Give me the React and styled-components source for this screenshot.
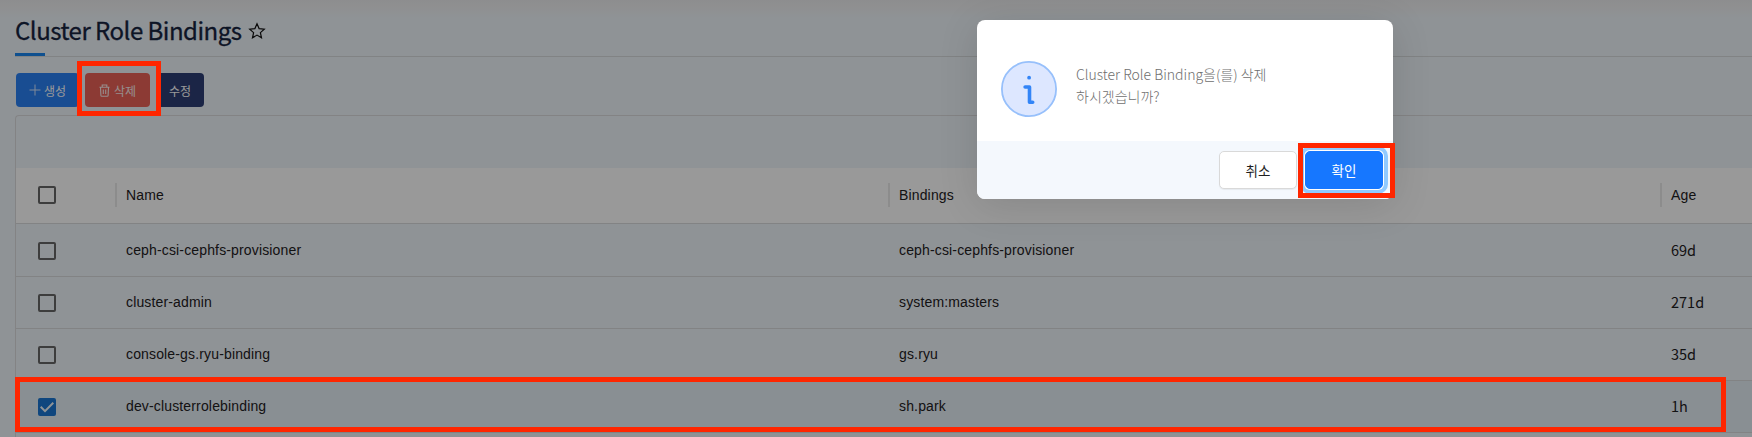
import React from "react";
import styled, { createGlobalStyle } from "styled-components";

const GlobalStyle = createGlobalStyle`
  * { box-sizing: border-box; }
  body { margin: 0; overflow: hidden; background: #eff5fa; }
`;

const sans = `"Noto Sans CJK KR", "Noto Sans", sans-serif`;
const arial = `"Liberation Sans", Arial, sans-serif`;

const Screen = styled.div`
  position: relative;
  height: 437px;
  overflow: hidden;
  background: #eff5fa;
  font-family: ${sans};
`;

const Page = styled.main`
  height: 100%;
  display: flex;
  flex-direction: column;
  padding-left: 15px;
  background: linear-gradient(#ececee 0, #eff1f3 9px, #eff5fa 18px);
`;

const TitleBar = styled.header`
  flex: none;
  display: flex;
  align-items: flex-start;
  height: 57px;
  padding: 11px 0 0 0;
  border-bottom: 1px solid #d8dadd;
`;

const Title = styled.h1`
  margin: 0;
  width: 226px;
  height: 38px;
  font-size: 24px;
  font-weight: 400;
  line-height: 38px;
  letter-spacing: -0.5px;
  color: #16233f;
  -webkit-text-stroke: 0.3px #16233f;
  white-space: nowrap;
`;

const Star = styled.svg`
  margin: 11px 0 0 7px;
`;

const TitleAccent = styled.div`
  flex: none;
  width: 30px;
  height: 3px;
  margin-top: -4px;
  margin-bottom: 1px;
  background: #1a86ef;
`;

const Toolbar = styled.div`
  flex: none;
  display: flex;
  gap: 6px;
  padding: 16px 0 8px 1px;
`;

const ToolButton = styled.button`
  display: flex;
  align-items: center;
  justify-content: center;
  gap: ${(p) => p.$gap || 0}px;
  width: ${(p) => p.$width}px;
  height: 34px;
  padding: 0;
  border: 0;
  border-radius: 4px;
  background: ${(p) => p.$color};
  color: ${(p) => p.$text || "#fff"};
  font: 400 12px ${sans};
`;

const Card = styled.section`
  flex: none;
  height: 340px;
  border: 1px solid #dadbdd;
  border-width: 1px 0 0 1px;
  border-radius: 4px 0 0 0;
`;

const TableTop = styled.div`
  height: 52px;
`;

const Row = styled.div`
  display: grid;
  grid-template-columns: 99px 773px 772px 1fr;
  align-items: start;
  height: ${(p) => p.$height || 52}px;
  padding-top: ${(p) => (p.$height ? 1 : 0)}px;
  border-bottom: 1px solid #d9dadc;
  background: ${(p) => p.$background || "transparent"};
`;

const CheckCell = styled.div`
  display: flex;
  padding: 17px 0 0 22px;
`;

const Cell = styled.div`
  padding: 15px 0 0 11px;
  font: 400 ${(p) => (p.$age ? 14.5 : 14)}px / 20px ${(p) => (p.$age ? sans : arial)};
  letter-spacing: ${(p) => (p.$age ? 0 : 0.15)}px;
  color: #1e2022;
`;

const HeadCell = styled(Cell)`
  height: 24px;
  margin-top: 14px;
  padding: 0 0 0 9px;
  border-left: 2px solid #e9e9e9;
  line-height: 24px;
`;

const CheckBox = styled.span`
  display: flex;
  width: 18px;
  height: 18px;
  border: 2px solid ${(p) => (p.$checked ? "#1976d2" : "#666")};
  border-radius: 2px;
  background: ${(p) => (p.$checked ? "#1976d2" : "transparent")};
`;

const Backdrop = styled.div`
  position: absolute;
  inset: 0;
  background: rgba(0, 0, 0, 0.4);
`;

const Dialog = styled.div`
  position: absolute;
  top: 20px;
  left: 977px;
  display: flex;
  flex-direction: column;
  width: 416px;
  height: 179px;
  overflow: hidden;
  border-radius: 8px;
  background: #fff;
  box-shadow: 0 6px 40px rgba(0, 0, 0, 0.12);
`;

const DialogBody = styled.div`
  flex: 1;
  display: flex;
  gap: 19px;
  padding: 41px 0 0 24px;
`;

const Message = styled.p`
  margin: 2px 0 0;
  font-size: 14px;
  font-weight: 300;
  line-height: 22px;
  color: #6e6e6e;
  white-space: nowrap;
`;

const DialogFooter = styled.div`
  display: flex;
  justify-content: flex-end;
  align-items: center;
  gap: 8px;
  height: 58px;
  padding: 0 10px 0 0;
  background: #f4f8fd;
`;

const DialogButton = styled.button`
  width: 78px;
  height: 38px;
  padding: 0;
  border: 1px solid ${(p) => (p.$primary ? "#1677ff" : "#d9d9d9")};
  border-radius: 5px;
  background: ${(p) => (p.$primary ? "#1677ff" : "#fff")};
  color: ${(p) => (p.$primary ? "#fff" : "#1f1f1f")};
  font: 400 13.5px ${sans};
  box-shadow: ${(p) =>
    p.$primary ? "0 0 0 1px #fff, 0 0 0 5px #91caff" : "0 1px 1px rgba(0, 0, 0, 0.06)"};
`;

const Highlight = styled.div`
  position: absolute;
  left: ${(p) => p.$x}px;
  top: ${(p) => p.$y}px;
  width: ${(p) => p.$w}px;
  height: ${(p) => p.$h}px;
  border: 5px solid #ff2600;
`;

const PlusIcon = () => (
  <svg width="12" height="12" viewBox="0 0 12 12" stroke="#fff" strokeWidth="1" opacity="0.8">
    <path d="M6 0.5v11M0.5 6h11" />
  </svg>
);

const TrashIcon = () => (
  <svg width="11" height="13" viewBox="0 0 11 13" fill="none" stroke="#fbeceb" strokeWidth="1.1">
    <path d="M0.5 3.2h10M3.2 3V1h4.6v2M1.5 3.4l.4 8.1q.1.8.8.8h5.6q.7 0 .8-.8l.4-8.1M4.3 5.5v4.6M6.7 5.5v4.6" />
  </svg>
);

const InfoIcon = () => (
  <svg width="56" height="56" viewBox="0 0 56 56">
    <circle cx="28" cy="28" r="27.1" fill="#dde7ff" stroke="#97c0fb" strokeWidth="1.8" />
    <circle cx="28.1" cy="16.7" r="1.9" fill="#3385f7" />
    <path
      d="M24.1 26h4.4v15.2M28.5 41.2h3.2"
      fill="none"
      stroke="#3385f7"
      strokeWidth="3.6"
      strokeLinecap="round"
      strokeLinejoin="round"
    />
  </svg>
);

const Check = ({ checked }) => (
  <CheckBox $checked={checked}>
    {checked && (
      <svg width="14" height="14" viewBox="0 0 14 14" fill="none" stroke="#eff5fa" strokeWidth="2">
        <path d="M0.7 6.8 5 11.1 13.3 2.8" />
      </svg>
    )}
  </CheckBox>
);

const bindings = [
  { name: "ceph-csi-cephfs-provisioner", subject: "ceph-csi-cephfs-provisioner", age: "69d", height: 53 },
  { name: "cluster-admin", subject: "system:masters", age: "271d" },
  { name: "console-gs.ryu-binding", subject: "gs.ryu", age: "35d" },
  { name: "dev-clusterrolebinding", subject: "sh.park", age: "1h", checked: true },
];

export default function App() {
  return (
    <Screen>
      <GlobalStyle />
      <Page>
        <TitleBar>
          <Title>Cluster Role Bindings</Title>
          <Star width="18" height="18" viewBox="0 0 18 18" fill="none" stroke="#111" strokeWidth="1.2">
            <path d="M9 1.7 11.1 6.6 16.3 7.1 12.4 10.6 13.5 15.8 9 13.1 4.5 15.8 5.6 10.6 1.7 7.1 6.9 6.6Z" />
          </Star>
        </TitleBar>
        <TitleAccent />
        <Toolbar>
          <ToolButton $width={63} $gap={3} $color="#2b80f4">
            <PlusIcon />
            생성
          </ToolButton>
          <ToolButton $width={65} $gap={4} $color="#ea6257" $text="#fbeceb">
            <TrashIcon />
            삭제
          </ToolButton>
          <ToolButton $width={48} $color="#2e3f75">
            수정
          </ToolButton>
        </Toolbar>
        <Card>
          <TableTop />
          <Row $height={56} $background="#fff">
            <CheckCell>
              <Check />
            </CheckCell>
            <HeadCell>Name</HeadCell>
            <HeadCell>Bindings</HeadCell>
            <HeadCell>Age</HeadCell>
          </Row>
          {bindings.map((b) => (
            <Row key={b.name} $height={b.height} $background={b.checked ? "#e5eef5" : undefined}>
              <CheckCell>
                <Check checked={b.checked} />
              </CheckCell>
              <Cell>{b.name}</Cell>
              <Cell>{b.subject}</Cell>
              <Cell $age>{b.age}</Cell>
            </Row>
          ))}
        </Card>
      </Page>
      <Backdrop />
      <Dialog role="dialog">
        <DialogBody>
          <InfoIcon />
          <Message>
            Cluster Role Binding을(를) 삭제
            <br />
            하시겠습니까?
          </Message>
        </DialogBody>
        <DialogFooter>
          <DialogButton>취소</DialogButton>
          <DialogButton $primary>확인</DialogButton>
        </DialogFooter>
      </Dialog>
      <Highlight $x={77} $y={61} $w={84} $h={55} />
      <Highlight $x={1298} $y={143} $w={97} $h={55} />
      <Highlight $x={15} $y={377} $w={1711} $h={55} />
    </Screen>
  );
}
